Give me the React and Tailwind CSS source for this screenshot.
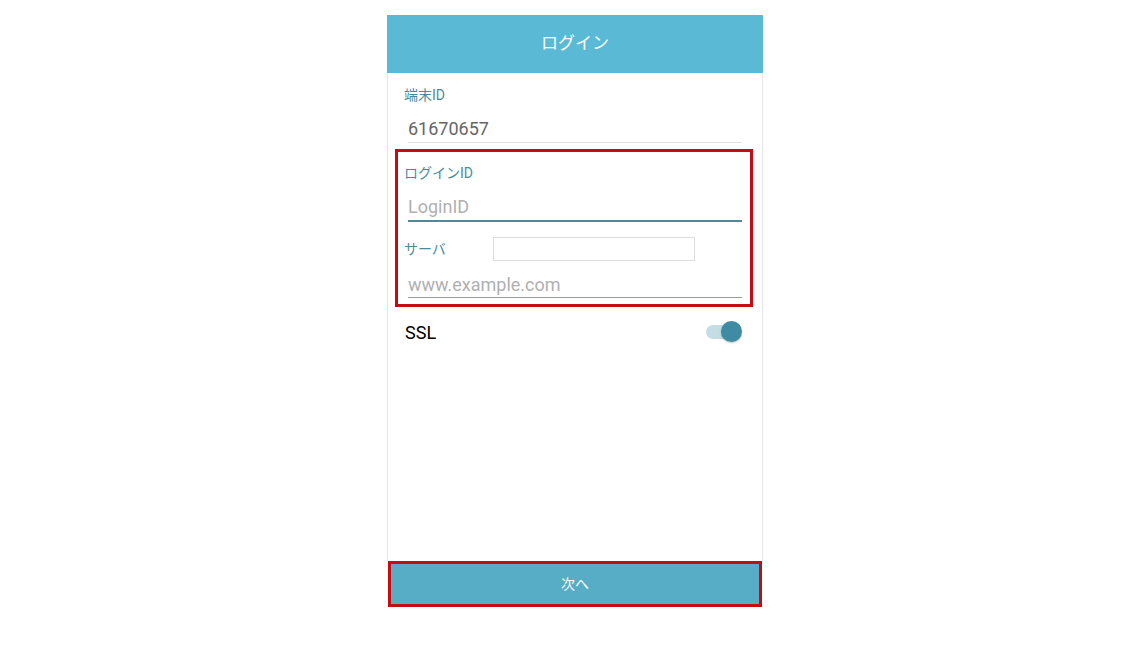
const font = { fontFamily: '"Roboto", "Noto Sans CJK JP", sans-serif' };

function Toggle() {
  return (
    <div className="relative w-[38px] h-[22px] flex items-center">
      <div className="ml-[2px] w-[30px] h-[14px] rounded-full bg-[#c3dde4]" />
      <div className="absolute right-0 top-0 w-[21px] h-[21px] rounded-full bg-[#3f8ba3] shadow-[0_1px_2px_rgba(0,0,0,0.25)]" />
    </div>
  );
}

export default function App() {
  return (
    <div className="w-[1148px] h-[645px] bg-white pt-[15px]" style={font}>
      <div className="ml-[387px] w-[376px]">
        <div className="h-[58px] bg-[#5ab9d4] flex items-center justify-center text-white text-[17px]">
          ログイン
        </div>

        <div className="h-[488px] border-x border-[#e6e6e6] flex flex-col">
          <div className="pl-[16px] pt-[14px] text-[14px] leading-[16px] text-[#4b8b99]">端末ID</div>
          <div className="ml-[20px] mr-[20px] mt-[14px] pb-[1px] border-b border-[#e2e2e2] text-[18px] leading-[24px] text-[#666]">
            61670657
          </div>

          <div className="ml-[7px] w-[358px] mt-[6px] border-[3px] border-[#c40d12] pl-[6px] pb-[6px]">
            <div className="pt-[13px] text-[14px] leading-[16px] text-[#4b8b99]">ログインID</div>
            <div className="ml-[4px] w-[334px] mt-[14px] pb-[1px] border-b-2 border-[#4d8a96] text-[18px] leading-[24px] text-[#b0b0b0]">
              LoginID
            </div>
            <div className="mt-[15px] flex items-center h-[24px]">
              <div className="w-[89px] text-[14px] text-[#4b8b99]">サーバ</div>
              <div className="w-[202px] h-[24px] border border-[#dcdcdc]" />
            </div>
            <div className="ml-[4px] w-[334px] mt-[12px] border-b border-[#9a9a9a] text-[18px] leading-[24px] text-[#b0b0b0]">
              www.example.com
            </div>
          </div>

          <div className="mt-[13px] ml-[17px] mr-[20px] flex items-center justify-between h-[24px]">
            <span className="text-[18px] text-black">SSL</span>
            <Toggle />
          </div>

          <div className="flex-1" />
        </div>

        <div className="ml-[1px] w-[374px] h-[46px] border-[3px] border-[#c40d12] bg-[#57adc6] flex items-center justify-center text-white text-[14px]">
          次へ
        </div>
      </div>
    </div>
  );
}
